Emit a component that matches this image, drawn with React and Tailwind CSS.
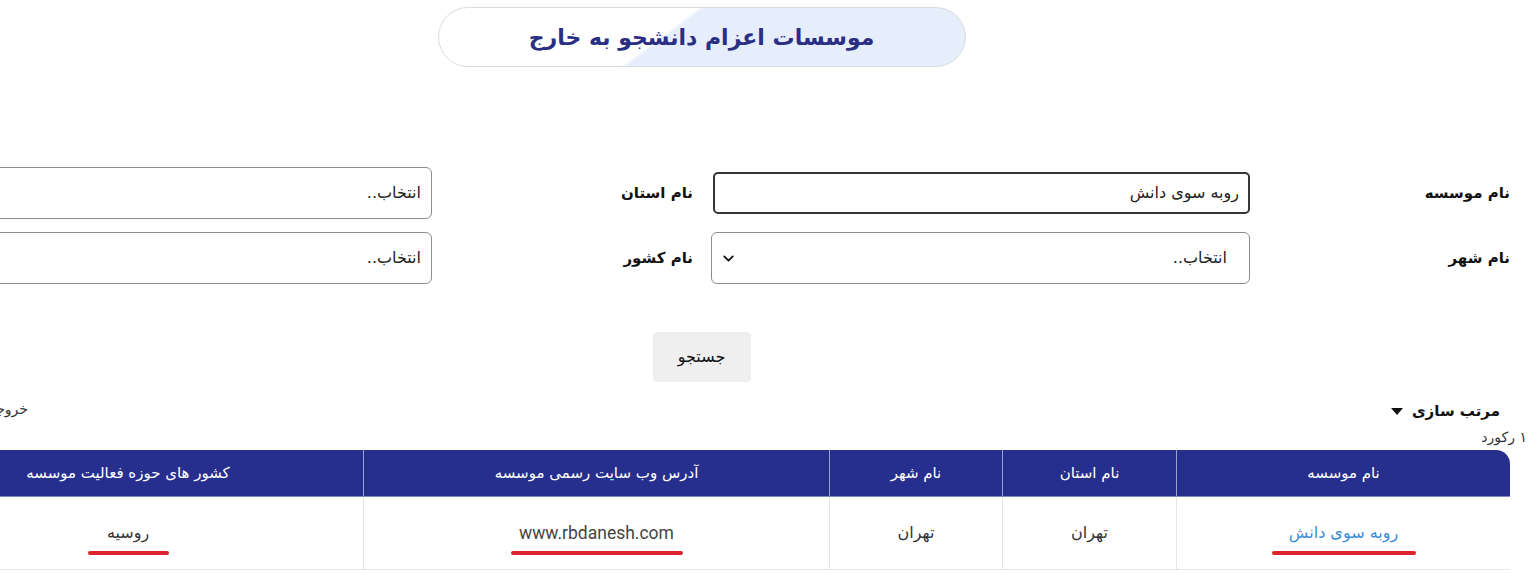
import { ChevronDown } from "lucide-react";

const fa = { fontFamily: '"DejaVu Sans", "Noto Sans", sans-serif' };

function Field({ children, className = "" }) {
  return (
    <div
      className={`h-[52px] w-[539px] shrink-0 flex items-center border border-[#8e8e8e] rounded-[6px] bg-white text-[16px] text-[#222] ${className}`}
    >
      {children}
    </div>
  );
}

function Underlined({ text, width, className = "" }) {
  return (
    <span className="inline-flex flex-col items-center">
      <span className={`leading-6 ${className}`}>{text}</span>
      <span className={`mt-[6px] h-[4px] rounded-full bg-[#dc2431] ${width}`} />
    </span>
  );
}

export default function App() {
  const columns = [
    "نام موسسه",
    "نام استان",
    "نام شهر",
    "آدرس وب سایت رسمی موسسه",
    "کشور های حوزه فعالیت موسسه",
  ];

  return (
    <div
      dir="rtl"
      className="w-[1536px] h-[574px] overflow-hidden bg-white text-[#111]"
      style={fa}
    >
      <div className="w-[1617px] mr-[26px] flex flex-col">
        {/* عنوان */}
        <div className="mx-auto mt-[7px] h-[60px] w-[528px] rounded-full border border-[#d8dde4] bg-[linear-gradient(143deg,#ffffff_43%,#e6eefb_44%)] flex items-center justify-center">
          <h1 className="text-[22px] font-bold text-[#2b2f83]">موسسات اعزام دانشجو به خارج</h1>
        </div>

        {/* فرم جستجو */}
        <div className="mt-[100px] flex flex-col gap-[13px]">
          <div className="flex items-center shrink-0">
            <label className="w-[260px] shrink-0 text-[15px] font-bold">نام موسسه</label>
            <div className="w-[539px] shrink-0 h-[52px] flex items-center">
              <div className="h-[42px] w-[537px] flex items-center border-2 border-[#363636] rounded-[5px] px-[9px] text-[16px] text-[#222]">
                روبه سوی دانش
              </div>
            </div>
            <label className="w-[279px] shrink-0 pr-[18px] text-[15px] font-bold">نام استان</label>
            <Field className="px-[10px]">انتخاب..</Field>
          </div>
          <div className="flex items-center shrink-0">
            <label className="w-[260px] shrink-0 text-[15px] font-bold">نام شهر</label>
            <Field className="h-[51px] justify-between pr-[22px] pl-[8px]">
              <span>انتخاب..</span>
              <ChevronDown size={17} strokeWidth={2.6} className="text-[#111]" />
            </Field>
            <label className="w-[279px] shrink-0 pr-[18px] text-[15px] font-bold">نام کشور</label>
            <Field className="h-[51px] px-[10px]">انتخاب..</Field>
          </div>
        </div>

        <button className="mx-auto mt-[48px] h-[50px] w-[98px] rounded-[4px] bg-[#efefef] text-[16px] text-[#111]">
          جستجو
        </button>

        {/* مرتب سازی */}
        <div className="mt-[17px] flex items-start justify-between">
          <div className="flex items-center gap-[9px] pr-[10px]">
            <span className="text-[15px] font-bold leading-6">مرتب سازی</span>
            <span className="w-0 h-0 border-l-[6px] border-r-[6px] border-t-[7px] border-l-transparent border-r-transparent border-t-[#111]" />
          </div>
          <span className="text-[14px] leading-5 text-[#333] w-[135px]">خروجی اکسل</span>
        </div>
        <div className="mt-[4px] mr-[-17px] text-[14px] leading-5 text-[#333]">۱ رکورد</div>

        {/* جدول */}
        <div className="mt-[3px] grid grid-cols-[333px_174px_173px_466px_471px]">
          {columns.map((c, i) => (
            <div
              key={c}
              className={`h-[47px] flex items-center justify-center bg-[#272f8e] text-white text-[15px] border-b border-[#7f86c2] ${
                i === 0 ? "rounded-tr-[14px]" : "border-r border-r-[#9aa0d2]"
              } ${i === 4 ? "rounded-tl-[14px]" : ""}`}
            >
              {c}
            </div>
          ))}
          <div className="h-[73px] flex items-start justify-center pt-[24px] border-b border-[#e5e5e5] text-[16px]">
            <Underlined text="روبه سوی دانش" width="w-[144px]" className="text-[#3a8bd6]" />
          </div>
          <div className="h-[73px] flex items-start justify-center pt-[24px] border-b border-r border-[#e5e5e5] text-[16px] text-[#333]">
            <span className="leading-6">تهران</span>
          </div>
          <div className="h-[73px] flex items-start justify-center pt-[24px] border-b border-r border-[#e5e5e5] text-[16px] text-[#333]">
            <span className="leading-6">تهران</span>
          </div>
          <div className="h-[73px] flex items-start justify-center pt-[24px] border-b border-r border-[#e5e5e5] text-[17.5px] text-[#444]">
            <Underlined
              text="www.rbdanesh.com"
              width="w-[172px]"
              className="[font-family:Roboto,sans-serif]"
            />
          </div>
          <div className="h-[73px] flex items-start justify-center pt-[24px] border-b border-r border-[#e5e5e5] text-[16px] text-[#333]">
            <Underlined text="روسیه" width="w-[81px]" />
          </div>
        </div>
      </div>
    </div>
  );
}
